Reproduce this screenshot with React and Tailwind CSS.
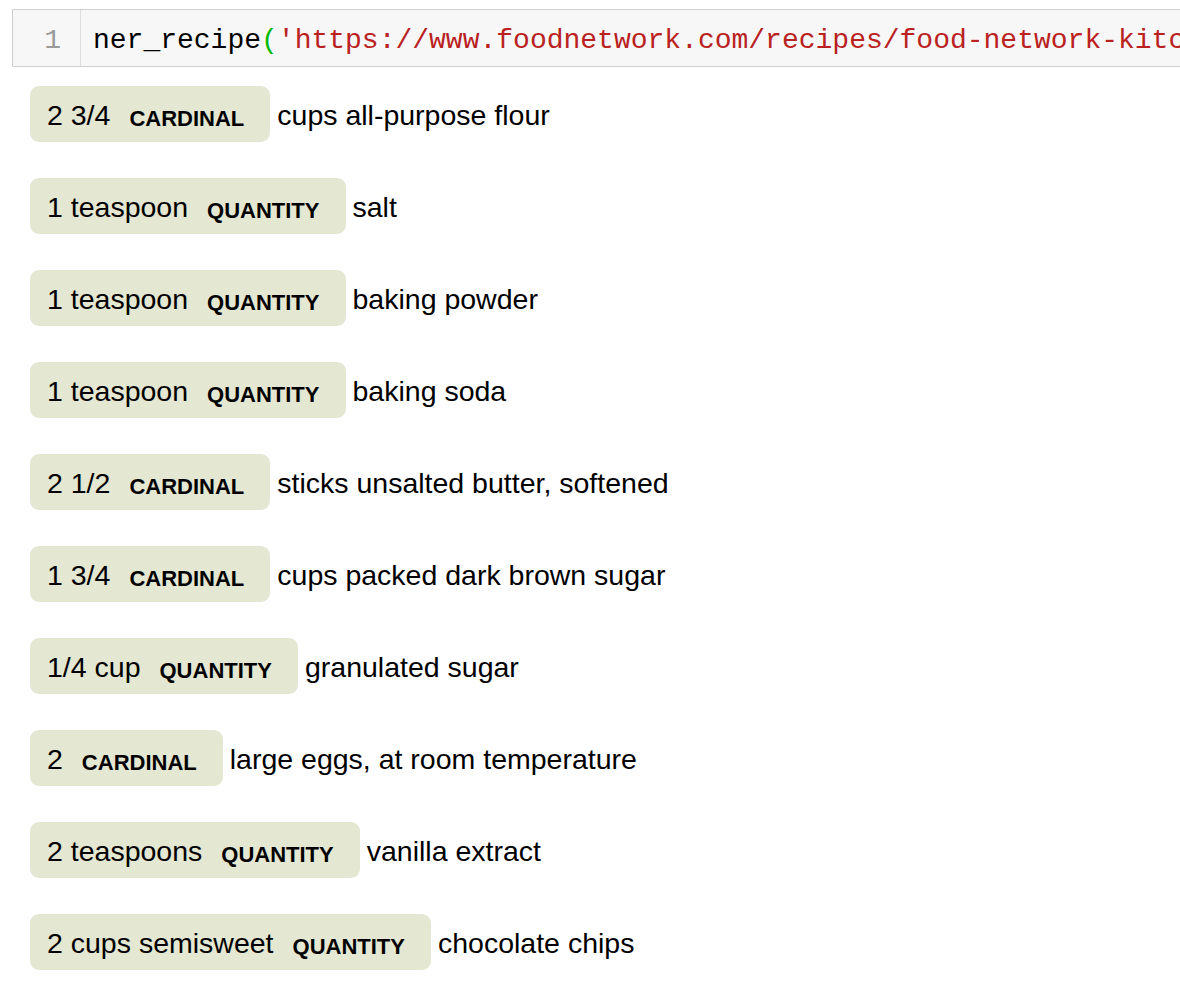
import React from "react";

const rows = [
  { ent: "2 3/4", label: "CARDINAL", rest: "cups all-purpose flour" },
  { ent: "1 teaspoon", label: "QUANTITY", rest: "salt" },
  { ent: "1 teaspoon", label: "QUANTITY", rest: "baking powder" },
  { ent: "1 teaspoon", label: "QUANTITY", rest: "baking soda" },
  { ent: "2 1/2", label: "CARDINAL", rest: "sticks unsalted butter, softened" },
  { ent: "1 3/4", label: "CARDINAL", rest: "cups packed dark brown sugar" },
  { ent: "1/4 cup", label: "QUANTITY", rest: "granulated sugar" },
  { ent: "2", label: "CARDINAL", rest: "large eggs, at room temperature" },
  { ent: "2 teaspoons", label: "QUANTITY", rest: "vanilla extract" },
  { ent: "2 cups semisweet", label: "QUANTITY", rest: "chocolate chips" },
];

export default function App() {
  return (
    <div className="min-h-screen w-full bg-white overflow-hidden pt-[9px] pl-[12px]">
      {/* code cell */}
      <div className="flex h-[58px] w-[1168px] border border-r-0 border-[#cfcfcf] bg-[#f7f7f7] rounded-l-[2px] overflow-hidden">
        <div className="w-[68px] shrink-0 border-r border-[#dddddd] flex items-center justify-end pr-[19px] pt-[6px] text-[28px] text-[#999999] font-['Liberation_Mono',monospace]">
          1
        </div>
        <div className="flex items-center pl-[12px] pt-[6px] whitespace-pre text-[28px] text-black font-['Liberation_Mono',monospace]">
          <span>ner_recipe</span>
          <span className="text-[#00bb00]">(</span>
          <span className="text-[#ba2121]">'https://www.foodnetwork.com/recipes/food-network-kitc</span>
        </div>
      </div>

      {/* entities output */}
      <div className="flex flex-col gap-[36px] mt-[19px] pl-[18px] font-['Liberation_Sans',Arial,sans-serif] text-[28.5px] text-black">
        {rows.map((r, i) => (
          <div key={i} className="flex items-center h-[56px]">
            <div className="flex items-center h-[56px] bg-[#e4e7d2] rounded-[9px] pl-[17px] pr-[26px] leading-none">
              <span className="mt-[2px]">{r.ent}</span>
              <span className="ml-[19px] mt-[9px] text-[22px] font-bold uppercase">{r.label}</span>
            </div>
            <span className="ml-[7px] mt-[2px] leading-none">{r.rest}</span>
          </div>
        ))}
      </div>
    </div>
  );
}
